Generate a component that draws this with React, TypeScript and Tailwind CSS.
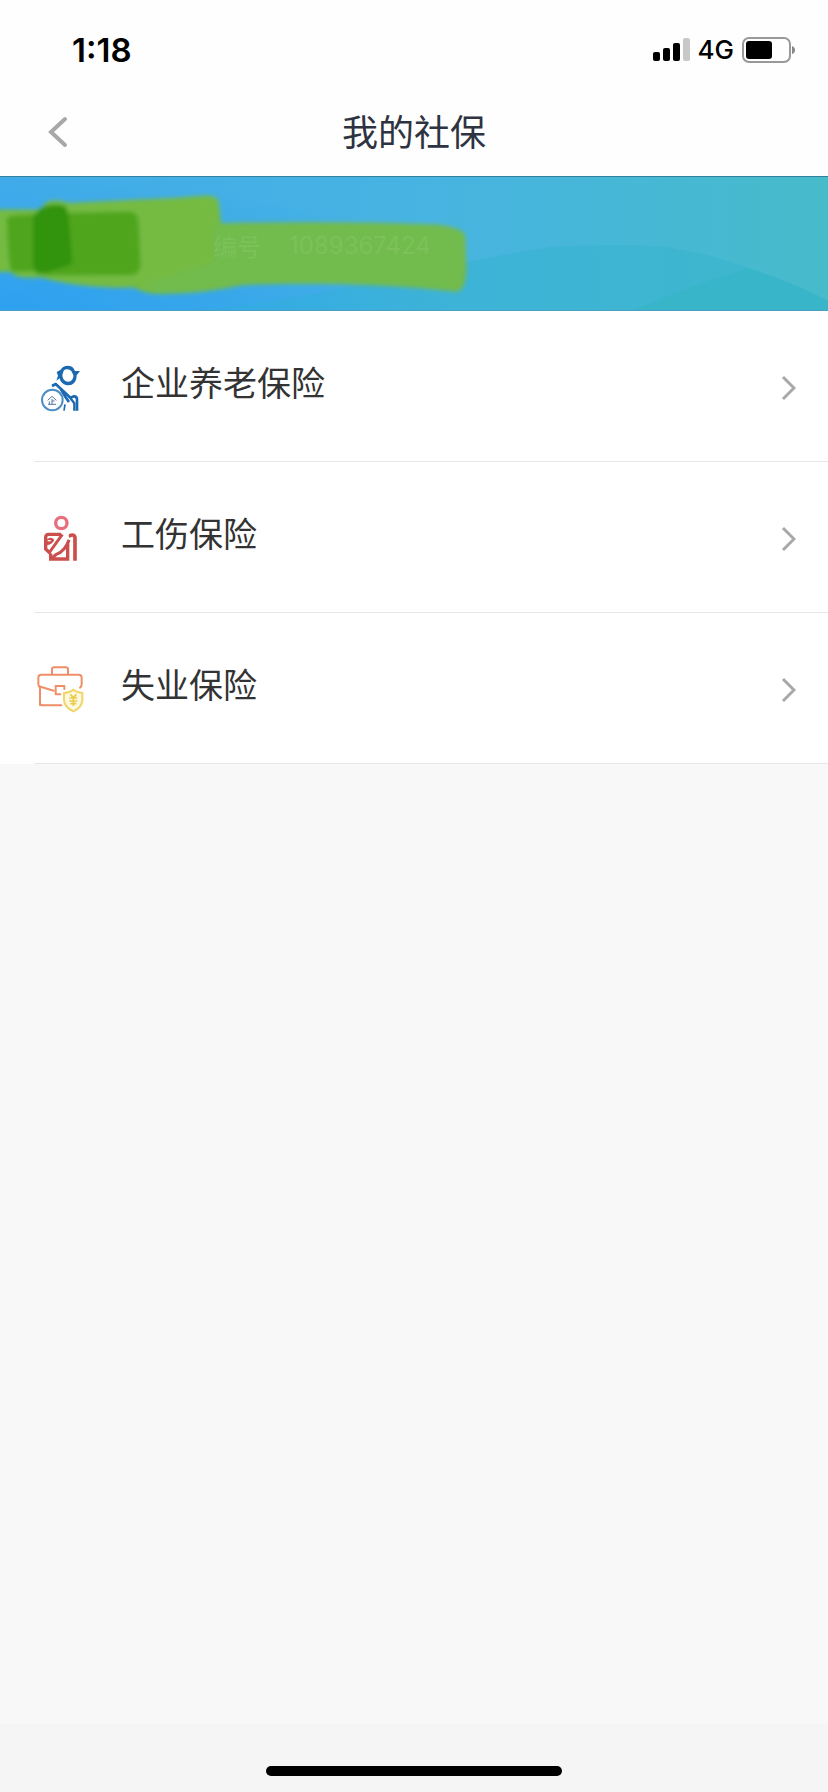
import type { ReactNode } from 'react';

interface InsuranceItem {
  label: string;
  icon: ReactNode;
}

function PensionIcon() {
  return (
    <svg viewBox="36 45 144 144" className="size-12 shrink-0" fill="none" aria-hidden="true">
      <path d="M107 62 C114 48 136 47 145 57 L150 66 L165 66 L155 79 C155 99 144 109 131 109 C117 109 106 101 104 88 L94 95 L99 80 L95 69 Z" fill="#1b69b0" />
      <path d="M116 65 C122 59 134 59 139 67 L145 78 C146 90 139 98 130 98 C119 98 112 89 112 78 Z" fill="#fff" />
      <path d="M81 111 L92 105 L136 146 L147 142 Q156 142 156 151 L156 185" stroke="#1b69b0" strokeWidth="8" strokeLinejoin="round" />
      <path d="M108 121 L121 143 L132 159" stroke="#1b69b0" strokeWidth="8" />
      <path d="M136 147 L148 163 L148 185" stroke="#1b69b0" strokeWidth="7" />
      <path d="M120 166 L117 185" stroke="#1b69b0" strokeWidth="5" />
      <circle cx="82" cy="153" r="31" fill="#fff" stroke="#4c8dc3" strokeWidth="6" />
      <path d="M68 154 L81 142 L94 154 M81 150 V165 M73 157 V165 M81 156 H89 M69 166 H93" stroke="#5278a0" strokeWidth="3" />
    </svg>
  );
}

function InjuryIcon() {
  return (
    <svg viewBox="36 48 144 144" className="size-12 shrink-0" fill="none" aria-hidden="true">
      <circle cx="109" cy="72" r="17" stroke="#e8707c" strokeWidth="10" />
      <path d="M108 106 H71 Q62 106 62 115 V150 L77 164 V180 H128 V127" stroke="#cb504d" strokeWidth="10" />
      <path d="M131 112 Q150 102 150 118 V185" stroke="#cb504d" strokeWidth="11" />
      <path d="M117 101 H132 C130 130 116 160 88 166 L75 162 Z" fill="#fff" />
      <path d="M112 106 L72 162 M132 122 C124 146 110 160 94 166 L81 177" stroke="#cb504d" strokeWidth="9" />
      <path d="M64 122 Q77 110 88 122 Q82 137 64 139" fill="#cb504d" />
      <path d="M68 125 H77" stroke="#fff" strokeWidth="4" />
    </svg>
  );
}

function UnemploymentIcon() {
  return (
    <svg viewBox="36 48 144 144" className="size-12 shrink-0" fill="none" aria-hidden="true">
      <g stroke="#ee8f68" strokeWidth="6" strokeLinecap="round" strokeLinejoin="round">
        <path d="M81 73 V59 Q81 52 88 52 H122 Q129 52 129 59 V73" />
        <path d="M45 165 V112 Q40 109 40 102 V83 Q40 74 49 74 H161 Q170 74 170 83 V103 Q170 109 165 113" />
        <path d="M42 109 L86 122 M45 158 Q45 166 53 166 H109" />
        <path d="M118 117 V108 H92 V133 H106" />
      </g>
      <path d="M145 119 Q156 128 172 129 V151 Q171 172 145 184 Q119 172 117 151 V129 Q134 128 145 119 Z" fill="#fdf8e2" stroke="#f1d566" strokeWidth="6" />
      <path d="M136 133 L145 143 L154 133 M133 144 H157 M133 153 H157 M145 143 V168 M136 161 H154" stroke="#eacb4c" strokeWidth="5" />
    </svg>
  );
}

const items: InsuranceItem[] = [
  { label: '企业养老保险', icon: <PensionIcon /> },
  { label: '工伤保险', icon: <InjuryIcon /> },
  { label: '失业保险', icon: <UnemploymentIcon /> },
];

function StatusBar() {
  return (
    <div className="flex h-[100px] items-center justify-between pr-8 pl-18 text-black">
      <span className="font-[Inter,sans-serif] text-[33px] leading-8 font-semibold">1:18</span>
      <div className="flex items-center gap-2">
        <svg width="37" height="24" viewBox="0 0 37 24" aria-hidden="true">
          <rect x="0" y="14" width="7" height="9" rx="2" />
          <rect x="10" y="10" width="7" height="13" rx="2" />
          <rect x="20" y="5" width="7" height="18" rx="2" />
          <rect x="30" y="0" width="7" height="23" rx="2" fill="#c8c8c8" />
        </svg>
        <span className="font-[Inter,sans-serif] text-[26px] leading-8 font-medium">4G</span>
        <svg width="54" height="26" viewBox="0 0 54 26" aria-hidden="true">
          <rect x="1" y="1" width="47" height="24" rx="6" fill="none" stroke="#999" strokeWidth="2" />
          <rect x="4" y="4" width="26" height="18" rx="3" />
          <path d="M50 9 Q53 10 53 13 Q53 16 50 17 Z" fill="#888" />
        </svg>
      </div>
    </div>
  );
}

function TitleBar() {
  return (
    <header className="grid h-[76px] grid-cols-[80px_1fr_80px] items-center pb-3">
      <button type="button" aria-label="返回" className="flex h-full items-center pl-12">
        <svg width="20" height="32" viewBox="0 0 20 32" fill="none" aria-hidden="true">
          <path d="M17 3 L3 16 L17 29" stroke="#a8a8a8" strokeWidth="4" strokeLinecap="round" />
        </svg>
      </button>
      <h1 className="pb-1 text-center text-[36px] leading-12 text-[#2e3342]">我的社保</h1>
    </header>
  );
}

function Banner() {
  return (
    <section className="relative flex h-[135px] items-center overflow-hidden border-t border-b border-t-[#33809c] border-b-[#4b9fc0] bg-linear-to-r from-[#41abe9] via-[#47b3e2] to-[#47bbca]">
      <svg className="absolute inset-0 h-full w-full" viewBox="0 33 2484 405" preserveAspectRatio="none" aria-hidden="true">
        <defs>
          <radialGradient id="shade" cx="0" cy="1" r="1">
            <stop offset="0" stopColor="#2b9ff0" stopOpacity="0.9" />
            <stop offset="1" stopColor="#2b9ff0" stopOpacity="0" />
          </radialGradient>
          <linearGradient id="wave" x1="0" y1="0" x2="1" y2="0">
            <stop offset="0" stopColor="#32a9e6" />
            <stop offset="0.4" stopColor="#3db3d8" />
            <stop offset="1" stopColor="#3fb7cb" />
          </linearGradient>
          <filter id="soft">
            <feGaussianBlur stdDeviation="6" />
          </filter>
        </defs>
        <rect y="33" width="1500" height="405" fill="url(#shade)" />
        <path d="M600 438 C1000 400 1300 300 1650 246 Q1820 236 1980 244 Q2200 270 2484 410 V438 Z" fill="url(#wave)" />
        <path d="M1900 438 Q2060 370 2240 311 Q2370 350 2484 410 V438 Z" fill="#38b5c8" />
        <g filter="url(#soft)">
          <path d="M-20 132 H122 Q135 104 165 104 Q190 106 210 112 L400 102 L520 97 L620 89 Q652 90 656 108 L663 174 Q1000 166 1300 178 Q1390 184 1396 215 L1399 320 Q1395 384 1365 382 Q1080 348 730 362 Q600 390 480 389 Q430 388 404 370 Q240 372 120 338 Q50 346 32 322 H-20 Z" fill="#75bb43" />
          <path d="M640 180 Q1100 166 1330 182 Q1388 190 1392 220 L1394 320 Q1388 375 1365 376 Q1000 350 730 358 Q600 384 480 384 L430 360 L640 290 Z" fill="#72bb4e" />
          <path d="M20 160 Q22 146 100 148 L122 130 Q150 112 190 120 L206 142 L390 138 Q414 142 416 165 L422 300 Q420 330 395 332 L150 333 Q110 333 100 320 L35 322 Q26 300 24 250 Z" fill="#4fa61f" />
          <path d="M100 150 L126 128 Q150 112 192 120 Q206 130 208 180 L217 290 Q214 304 190 308 L140 324 Q105 326 100 310 Z" fill="#32930d" />
        </g>
      </svg>
      <p className="relative flex gap-7 pt-1 pl-[213px] text-2xl text-[#7cc15a]">
        <span>编号</span>
        <span className="font-[Inter,sans-serif]">1089367424</span>
      </p>
    </section>
  );
}

function InsuranceRow({ label, icon }: InsuranceItem) {
  return (
    <li className="bg-white pl-[34px]">
      <a href="#" className="flex h-[151px] items-center border-b border-[#e6e6e6] pt-1 pr-8 pl-[3px]">
        {icon}
        <span className="flex-1 pb-3 pl-9 text-[34px] leading-12 text-[#333]">{label}</span>
        <svg width="18" height="28" viewBox="0 0 18 28" fill="none" aria-hidden="true">
          <path d="M5 3 L16 14 L5 25" stroke="#a8a8a8" strokeWidth="3" />
        </svg>
      </a>
    </li>
  );
}

export default function App() {
  return (
    <div className="flex min-h-screen flex-col bg-[#f8f8f8] font-['Noto_Sans_CJK_SC',sans-serif]">
      <div className="bg-[#fefefe]">
        <StatusBar />
        <TitleBar />
      </div>
      <main className="flex-1">
        <Banner />
        <ul>
          {items.map((item) => (
            <InsuranceRow key={item.label} {...item} />
          ))}
        </ul>
      </main>
      <footer className="flex h-17 items-end justify-center bg-[#f5f5f5] pb-4">
        <div className="h-[10px] w-[296px] rounded-full bg-black" />
      </footer>
    </div>
  );
}
